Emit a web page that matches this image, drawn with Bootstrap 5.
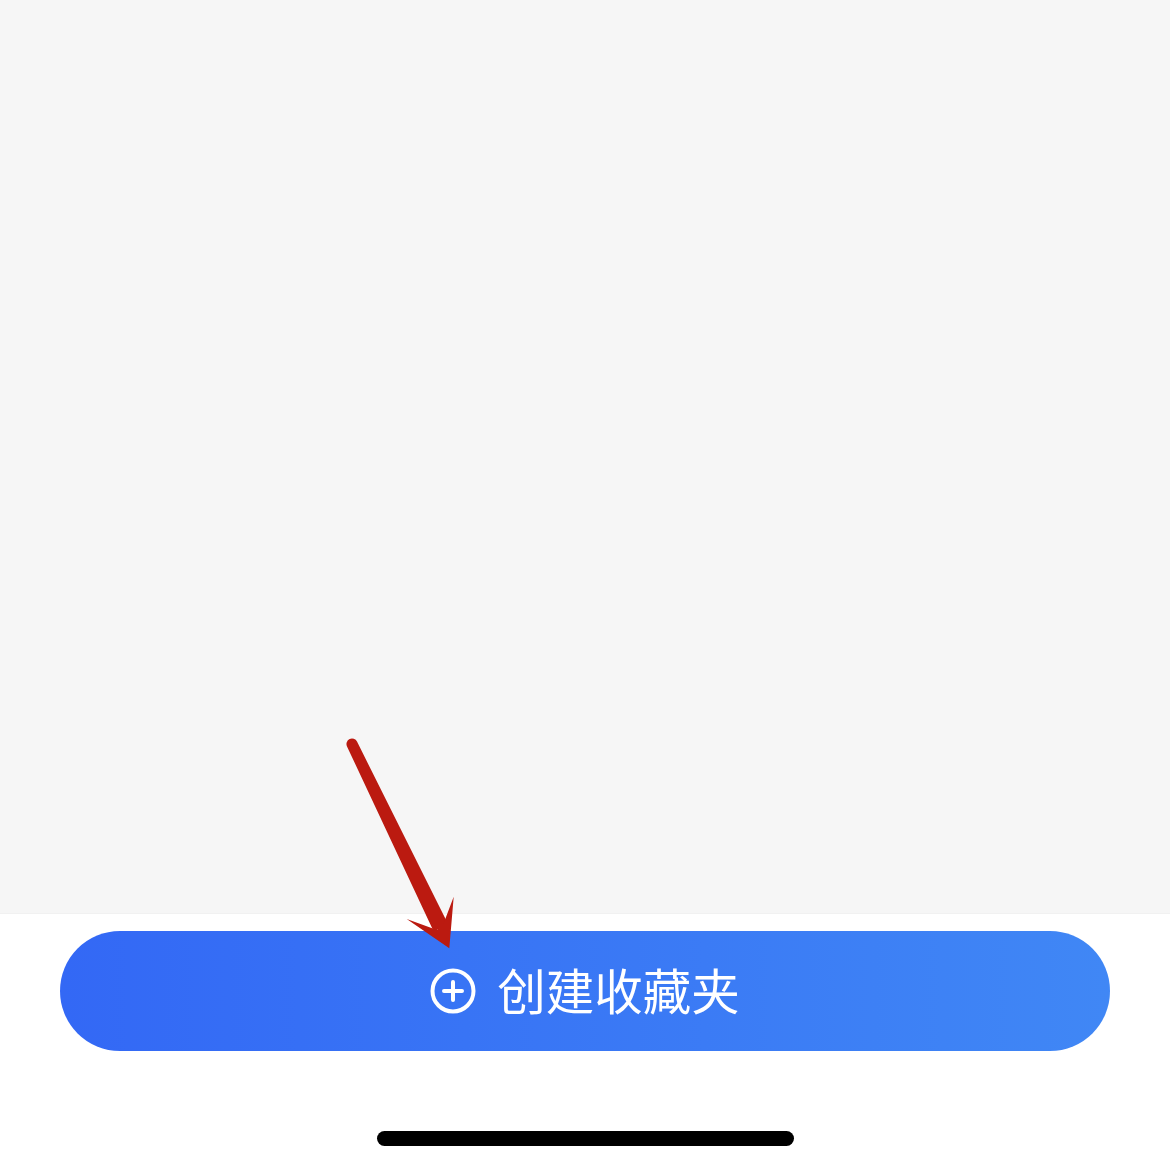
<!DOCTYPE html>
<html lang="zh">
<head>
<meta charset="utf-8">
<title>创建收藏夹</title>
<link href="https://cdn.jsdelivr.net/npm/bootstrap@5.3.0/dist/css/bootstrap.min.css" rel="stylesheet">
<style>
html, body { height: 100%; }
body { margin: 0; background: #fff; font-family: "Noto Sans CJK SC", "Liberation Sans", sans-serif; overflow: hidden; }
.app-screen { position: relative; width: 1170px; height: 1170px; }
.empty-area { height: 914px; background: #f6f6f6; border-bottom: 1px solid #f1f1f1; }
.footer-area { padding: 17px 60px 0; }
.create-btn { height: 120px; width: 100%; border: 0; border-radius: 60px; color: #fff; background: linear-gradient(90deg, #3368f5 0%, #4087f5 100%); font-size: 48.5px; font-weight: 400; line-height: 1; gap: 21px; padding: 0; }
.create-btn:hover, .create-btn:active { color: #fff; background: linear-gradient(90deg, #3368f5 0%, #4087f5 100%); }
.create-btn svg { width: 46px; height: 46px; flex: none; }
.create-label { position: relative; top: -2px; }
.home-bar { width: 417px; height: 15px; background: #000; border-radius: 8px; margin: 80px 0 0 377px; }
.note-arrow { position: absolute; left: 340px; top: 730px; width: 130px; height: 230px; pointer-events: none; }
</style>
</head>
<body>
<div class="app-screen">
  <div class="empty-area"></div>
  <div class="footer-area">
    <button type="button" class="btn create-btn d-flex align-items-center justify-content-center">
      <svg viewBox="0 0 46 46" fill="none" stroke="#fff" stroke-linecap="round" aria-hidden="true">
        <circle cx="23" cy="23" r="20.5" stroke-width="4"/>
        <path d="M14 23h18M23 14v18" stroke-width="4"/>
      </svg>
      <span class="create-label">创建收藏夹</span>
    </button>
  </div>
  <div class="home-bar"></div>
  <svg class="note-arrow" viewBox="0 0 130 230" aria-hidden="true">
    <path d="M7 16.4A5.5 5.5 0 0 1 17 11.6L108.3 194.5L93.7 201.5Z" fill="#bb1a10"/>
    <path d="M113.7 166.7L109.3 218.3L66.7 189L97 200L103 195Z" fill="#bb1a10"/>
  </svg>
</div>
<script src="https://cdn.jsdelivr.net/npm/bootstrap@5.3.0/dist/js/bootstrap.bundle.min.js"></script>
</body>
</html>
